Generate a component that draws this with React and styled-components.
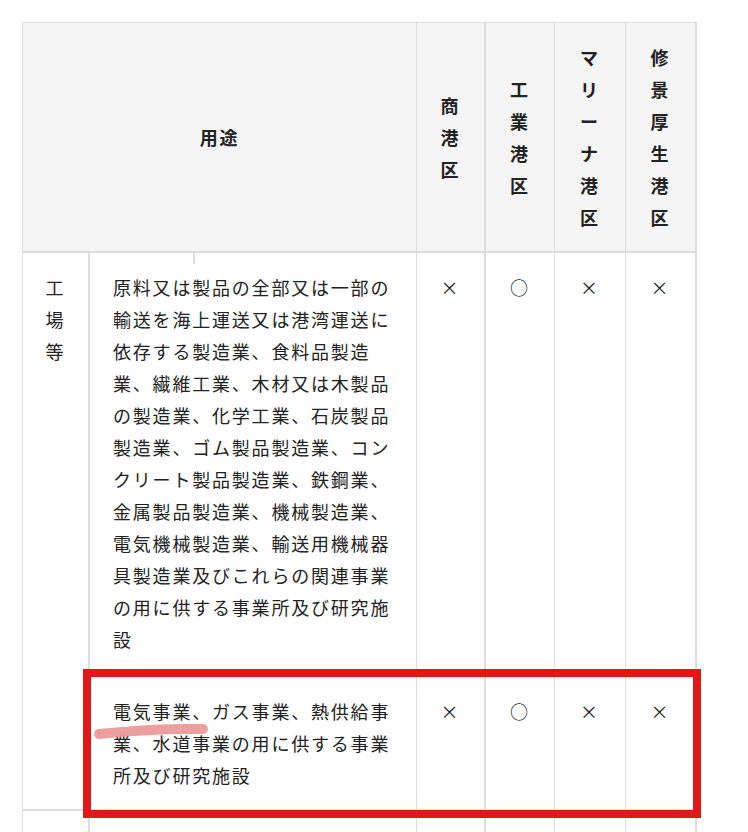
import styled, { createGlobalStyle } from "styled-components";

const GlobalStyle = createGlobalStyle`
  html, body {
    margin: 0;
    padding: 0;
    background: #fff;
  }
  body {
    font-family: "Noto Sans CJK JP", "Noto Sans", sans-serif;
    color: #222;
  }
`;

const COLS = [67, 327, 69, 69, 71, 71];
const LINE = "#dddddd";

const headers = ["商港区", "工業港区", "マリーナ港区", "修景厚生港区"];

const rows = [
  {
    text: "原料又は製品の全部又は一部の輸送を海上運送又は港湾運送に依存する製造業、食料品製造業、繊維工業、木材又は木製品の製造業、化学工業、石炭製品製造業、ゴム製品製造業、コンクリート製品製造業、鉄鋼業、金属製品製造業、機械製造業、電気機械製造業、輸送用機械器具製造業及びこれらの関連事業の用に供する事業所及び研究施設",
    marks: ["×", "○", "×", "×"],
  },
];

const App = () => {
  return (
    <Page>
      <GlobalStyle />
      <Wrap>
        <Table>
          <colgroup>
            {COLS.map((w, i) => (
              <Col key={i} $w={w} />
            ))}
          </colgroup>
          <thead>
            <tr>
              <HeadCell colSpan={2} $right={1}>
                用途
              </HeadCell>
              {headers.map((h, i) => (
                <HeadCell key={h} $right={i === 0 || i === 3 ? 2 : 1}>
                  <Stack>{h}</Stack>
                </HeadCell>
              ))}
            </tr>
          </thead>
          <tbody>
            <tr>
              <GroupCell rowSpan={2}>
                <Stack>工場等</Stack>
              </GroupCell>
              <TextCell>
                <Tick />
                {rows[0].text}
              </TextCell>
              {rows[0].marks.map((m, i) => (
                <MarkCell key={i} $right={i === 0 || i === 3 ? 2 : 1}>
                  {m}
                </MarkCell>
              ))}
            </tr>
            <tr>
              <TextCell $bottom={2} $pt={19} $pb={18}>
                <Marked>
                  電気事業
                  <Stroke viewBox="0 0 120 18" aria-hidden="true">
                    <path d="M6 12 C 38 8.5, 78 6.5, 110 7" />
                  </Stroke>
                </Marked>
                、ガス事業、熱供給事業、水道事業の用に供する事業所及び研究施設
              </TextCell>
              {["×", "○", "×", "×"].map((m, i) => (
                <MarkCell
                  key={i}
                  $bottom={2}
                  $pt={19}
                  $pb={18}
                  $right={i === 0 || i === 3 ? 2 : 1}
                >
                  {m}
                </MarkCell>
              ))}
            </tr>
            <tr>
              <GroupCell>&nbsp;</GroupCell>
              <TextCell>&nbsp;</TextCell>
              {[0, 1, 2, 3].map((i) => (
                <MarkCell key={i} $right={i === 0 || i === 3 ? 2 : 1}>
                  &nbsp;
                </MarkCell>
              ))}
            </tr>
          </tbody>
        </Table>
        <Highlight />
      </Wrap>
    </Page>
  );
};

export default App;

const Page = styled.div`
  padding: 22px 0 0 22px;
`;

const Wrap = styled.div`
  position: relative;
  width: 675px;
`;

const Table = styled.table`
  border-collapse: separate;
  border-spacing: 0;
  table-layout: fixed;
  width: 675px;
  border-left: 1px solid ${LINE};
  border-top: 1px solid ${LINE};
  font-size: 18px;
  line-height: 32px;
  letter-spacing: 0.1em;
`;

const Col = styled.col`
  width: ${(p) => p.$w}px;
`;

const HeadCell = styled.th`
  box-sizing: border-box;
  background: #f5f5f5;
  padding: 18px 0;
  font-weight: 700;
  text-align: center;
  vertical-align: middle;
  border-right: ${(p) => p.$right || 1}px solid ${LINE};
  border-bottom: 2px solid ${LINE};
`;

const Stack = styled.span`
  display: block;
  width: 1.1em;
  margin: 0 auto;
  word-break: break-all;
`;

const GroupCell = styled.td`
  box-sizing: border-box;
  padding: 18px 0 20px;
  text-align: center;
  vertical-align: top;
  border-right: 2px solid ${LINE};
  border-bottom: 2px solid ${LINE};
`;

const TextCell = styled.td`
  position: relative;
  box-sizing: border-box;
  padding: ${(p) => p.$pt || 18}px 23px ${(p) => p.$pb || 20}px;
  vertical-align: top;
  border-right: 1px solid ${LINE};
  border-bottom: ${(p) => p.$bottom || 1}px solid ${LINE};
`;

const MarkCell = styled.td`
  box-sizing: border-box;
  padding: ${(p) => p.$pt || 18}px 0 ${(p) => p.$pb || 20}px;
  text-align: center;
  vertical-align: top;
  border-right: ${(p) => p.$right || 1}px solid ${LINE};
  border-bottom: ${(p) => p.$bottom || 1}px solid ${LINE};
`;

const Tick = styled.span`
  position: absolute;
  left: 103px;
  top: 0;
  width: 2px;
  height: 11px;
  background: ${LINE};
`;

const Marked = styled.span`
  position: relative;
`;

const Stroke = styled.svg`
  position: absolute;
  left: -20px;
  top: 24px;
  width: 120px;
  height: 18px;
  overflow: visible;
  pointer-events: none;

  path {
    fill: none;
    stroke: #e99595;
    stroke-opacity: 0.9;
    stroke-width: 10;
    stroke-linecap: round;
  }
`;

const Highlight = styled.div`
  position: absolute;
  left: 61px;
  top: 647px;
  width: 618px;
  height: 149px;
  box-sizing: border-box;
  border: 8px solid #e21818;
  pointer-events: none;
`;
